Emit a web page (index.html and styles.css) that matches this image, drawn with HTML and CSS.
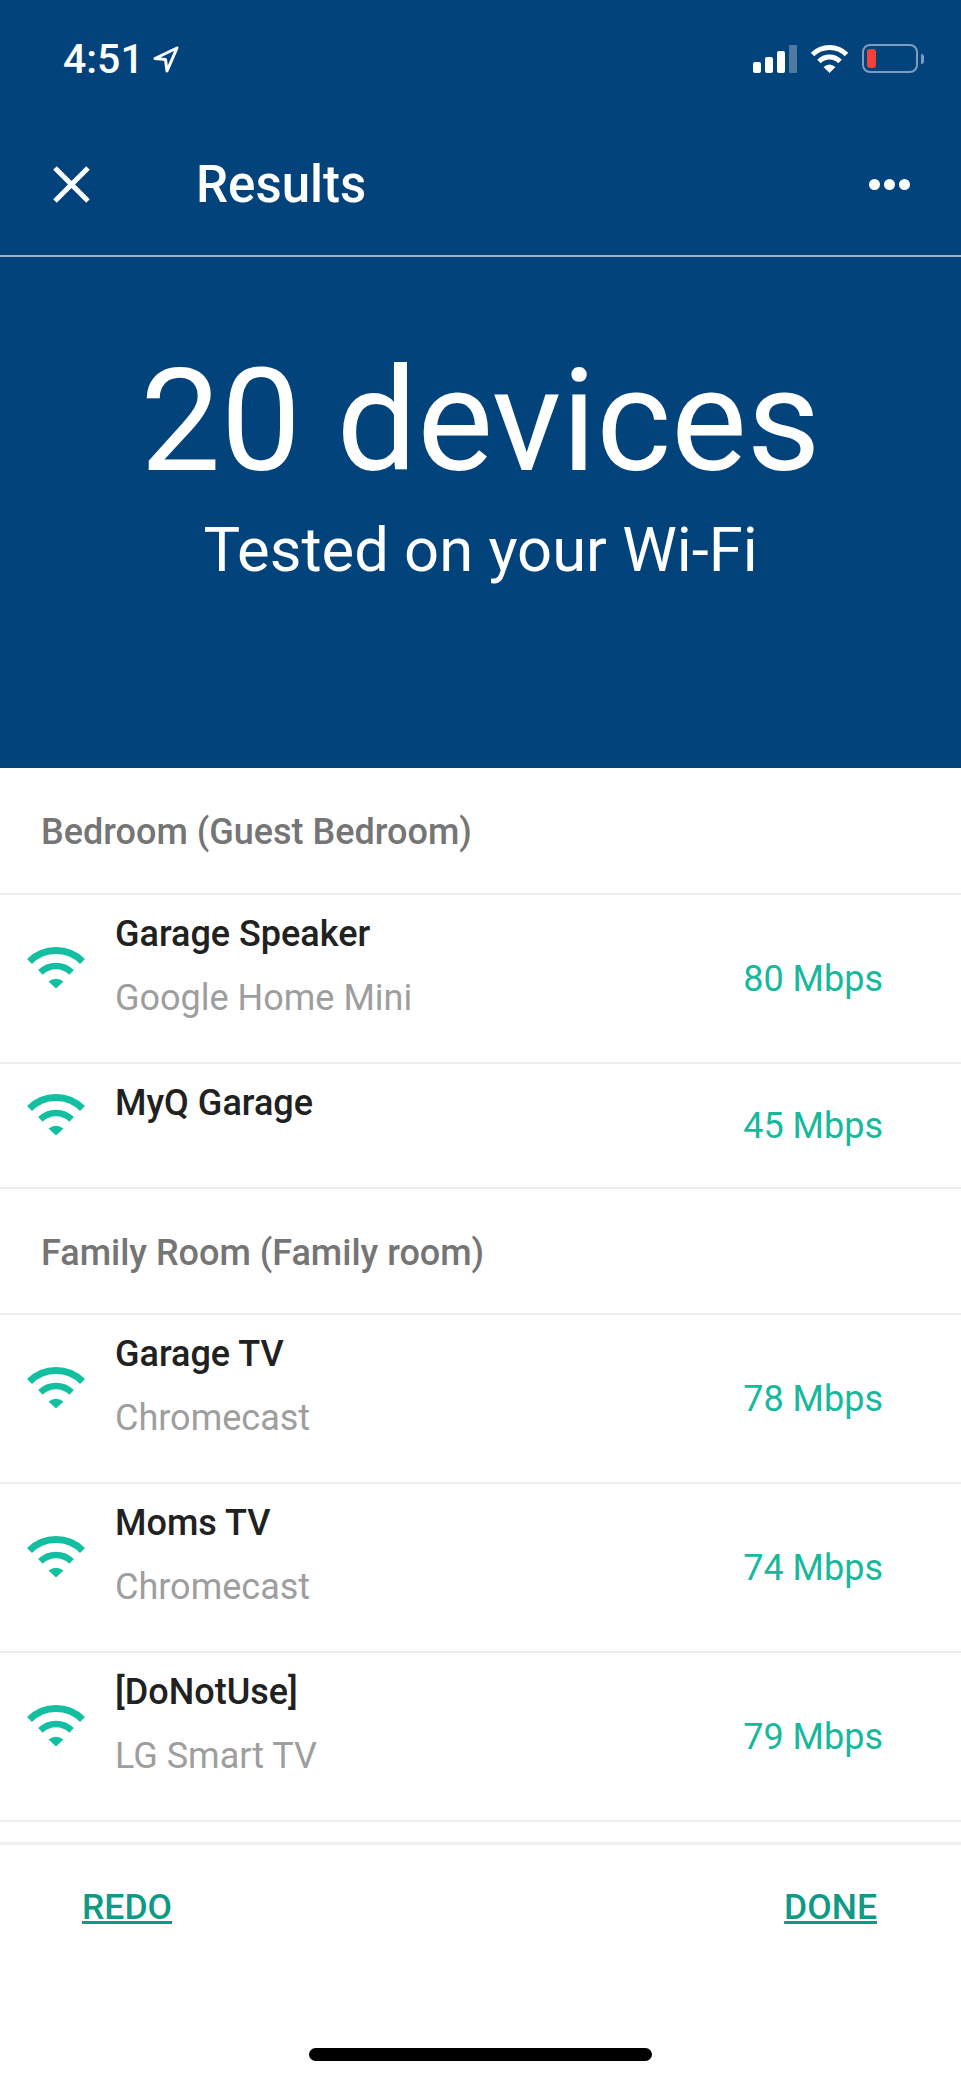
FILE: index.html
```html
<!DOCTYPE html>
<html lang="en">
<head>
  <meta charset="UTF-8">
  <meta name="viewport" content="width=device-width, initial-scale=1.0">
  <title>Results</title>
  <link rel="stylesheet" href="styles.css">
</head>
<body>
  <svg class="defs" width="0" height="0">
    <symbol id="wifi" viewBox="0 0 58 42">
      <path d="M2.500 14.500A37.500 37.500 0 0 1 55.500 14.500" fill="none" stroke="currentColor" stroke-width="7"/>
      <path d="M13.400 25.400A22 22 0 0 1 44.600 25.400" fill="none" stroke="currentColor" stroke-width="6.500"/>
      <path d="M21.500 34.500Q29 29 36.500 34.500L29 41.500Z" fill="currentColor"/>
    </symbol>
  </svg>

  <div class="screen">
    <header class="top">
      <div class="status">
        <div class="time">
          <span>4:51</span>
          <svg class="arrow" width="26" height="27" viewBox="0 0 26 27"><path d="M24 2L2 12.500L12.500 13.500L14 25Z" fill="none" stroke="#fff" stroke-width="3" stroke-linejoin="round"/></svg>
        </div>
        <div class="status-icons">
          <svg width="44" height="28" viewBox="0 0 44 28">
            <rect x="0" y="17" width="8" height="11" rx="2" fill="#fff"/>
            <rect x="12" y="12" width="8" height="16" rx="2" fill="#fff"/>
            <rect x="24" y="6" width="8" height="22" rx="2" fill="#fff"/>
            <rect x="36" y="0" width="8" height="28" rx="1" fill="#fff" opacity="0.3"/>
          </svg>
          <svg width="39" height="29" viewBox="0 0 39 29">
            <path d="M2.500 10.500A24 24 0 0 1 36.500 10.500" fill="none" stroke="#fff" stroke-width="5"/>
            <path d="M9 17.500A14.500 14.500 0 0 1 30 17.500" fill="none" stroke="#fff" stroke-width="5"/>
            <path d="M13.500 23Q19.500 18 25.500 23L19.500 29Z" fill="#fff"/>
          </svg>
          <div class="battery">
            <div class="battery-body"><div class="battery-fill"></div></div>
            <div class="battery-nub"></div>
          </div>
        </div>
      </div>
      <nav class="nav">
        <svg class="close" width="37" height="37" viewBox="0 0 37 37"><path d="M2 2L35 35M35 2L2 35" stroke="#fff" stroke-width="5" fill="none"/></svg>
        <div class="nav-title">Results</div>
        <div class="dots"><span></span><span></span><span></span></div>
      </nav>
    </header>

    <section class="hero">
      <div class="hero-count">20 devices</div>
      <div class="hero-sub">Tested on your Wi-Fi</div>
    </section>

    <main class="list">
      <div class="group-title group-first">Bedroom (Guest Bedroom)</div>
      <div class="row">
        <svg class="wifi"><use href="#wifi"/></svg>
        <div class="info"><div class="name">Garage Speaker</div><div class="model">Google Home Mini</div></div>
        <div class="speed">80 Mbps</div>
      </div>
      <div class="row row-short">
        <svg class="wifi"><use href="#wifi"/></svg>
        <div class="info"><div class="name">MyQ Garage</div></div>
        <div class="speed">45 Mbps</div>
      </div>
      <div class="group-title">Family Room (Family room)</div>
      <div class="row">
        <svg class="wifi"><use href="#wifi"/></svg>
        <div class="info"><div class="name">Garage TV</div><div class="model">Chromecast</div></div>
        <div class="speed">78 Mbps</div>
      </div>
      <div class="row">
        <svg class="wifi"><use href="#wifi"/></svg>
        <div class="info"><div class="name">Moms TV</div><div class="model">Chromecast</div></div>
        <div class="speed">74 Mbps</div>
      </div>
      <div class="row">
        <svg class="wifi"><use href="#wifi"/></svg>
        <div class="info"><div class="name">[DoNotUse]</div><div class="model">LG Smart TV</div></div>
        <div class="speed">79 Mbps</div>
      </div>
    </main>

    <footer class="footer">
      <div class="actions">
        <a class="action">REDO</a>
        <a class="action">DONE</a>
      </div>
      <div class="home-bar"></div>
    </footer>
  </div>
</body>
</html>
```

FILE: styles.css
```css
* {
  box-sizing: border-box;
}
body {
  margin: 0;
  font-family: Roboto, sans-serif;
  background-color: #fff;
}
.defs {
  display: block;
  height: 0;
}
.screen {
  display: flex;
  flex-direction: column;
  height: 2081px;
  overflow: hidden;
}
.top {
  height: 257px;
  background-color: #03437b;
  border-bottom: 2px solid #9fb5cb;
  color: #fff;
}
.status {
  display: flex;
  justify-content: space-between;
  height: 128px;
  padding: 44px 37px 0 63px;
}
.time {
  display: flex;
  align-items: flex-start;
  gap: 9px;
  font-size: 41px;
  font-weight: 500;
  line-height: 30px;
}
.arrow {
  margin-top: 2px;
}
.status-icons {
  display: flex;
  align-items: flex-start;
  height: 30px;
}
.status-icons svg:first-child {
  margin: 1px 13px 0 0;
}
.battery {
  display: flex;
  align-items: center;
  gap: 3px;
  margin-left: 13px;
}
.battery-body {
  width: 56px;
  height: 29px;
  padding: 3px;
  border: 2px solid #7d9dbf;
  border-radius: 8px;
}
.battery-fill {
  width: 9px;
  height: 19px;
  background-color: #f44336;
  border-radius: 3px;
}
.battery-nub {
  width: 3px;
  height: 10px;
  background-color: #7d9dbf;
  border-radius: 0 3px 3px 0;
}
.nav {
  display: flex;
  align-items: center;
  height: 127px;
  padding: 0 51px 14px 53px;
}
.nav-title {
  flex: 1;
  margin-left: 106px;
  font-size: 51px;
  font-weight: 500;
}
.dots {
  display: flex;
  gap: 4px;
}
.dots span {
  width: 11px;
  height: 11px;
  background-color: #fff;
  border-radius: 50%;
}
.hero {
  height: 511px;
  padding-top: 84px;
  background-color: #03437b;
  color: #fff;
  text-align: center;
}
.hero-count {
  font-size: 143px;
  line-height: 160px;
}
.hero-sub {
  margin-top: 14px;
  font-size: 61.5px;
  line-height: 70px;
}
.list {
  flex: 1;
  min-height: 0;
}
.group-title {
  height: 126px;
  padding: 3px 0 0 41px;
  display: flex;
  align-items: center;
  font-size: 36px;
  font-weight: 500;
  color: #757575;
  border-bottom: 2px solid #eee;
}
.group-first {
  height: 127px;
}
.row {
  display: flex;
  align-items: center;
  height: 169px;
  padding: 0 78px 0 27px;
  border-bottom: 2px solid #eee;
}
.row-short {
  height: 125px;
}
.wifi {
  width: 58px;
  height: 42px;
  margin-bottom: 22px;
  color: #12bfa1;
}
.info {
  flex: 1;
  align-self: flex-start;
  margin-left: 30px;
  padding-top: 7px;
}
.name {
  font-size: 36px;
  font-weight: 500;
  line-height: 64px;
  color: #212121;
}
.model {
  font-size: 36px;
  line-height: 64px;
  color: #9e9e9e;
}
.speed {
  margin-top: 1px;
  font-size: 36px;
  color: #17b99c;
}
.footer {
  height: 239px;
  border-top: 3px solid #eee;
}
.actions {
  display: flex;
  justify-content: space-between;
  padding: 42px 84px 0 82px;
}
.action {
  font-size: 35.5px;
  font-weight: 500;
  line-height: 40px;
  color: #0f9a85;
  text-decoration: underline;
}
.home-bar {
  width: 343px;
  height: 13px;
  margin: 121px auto 0;
  background-color: #000;
  border-radius: 7px;
}
```
